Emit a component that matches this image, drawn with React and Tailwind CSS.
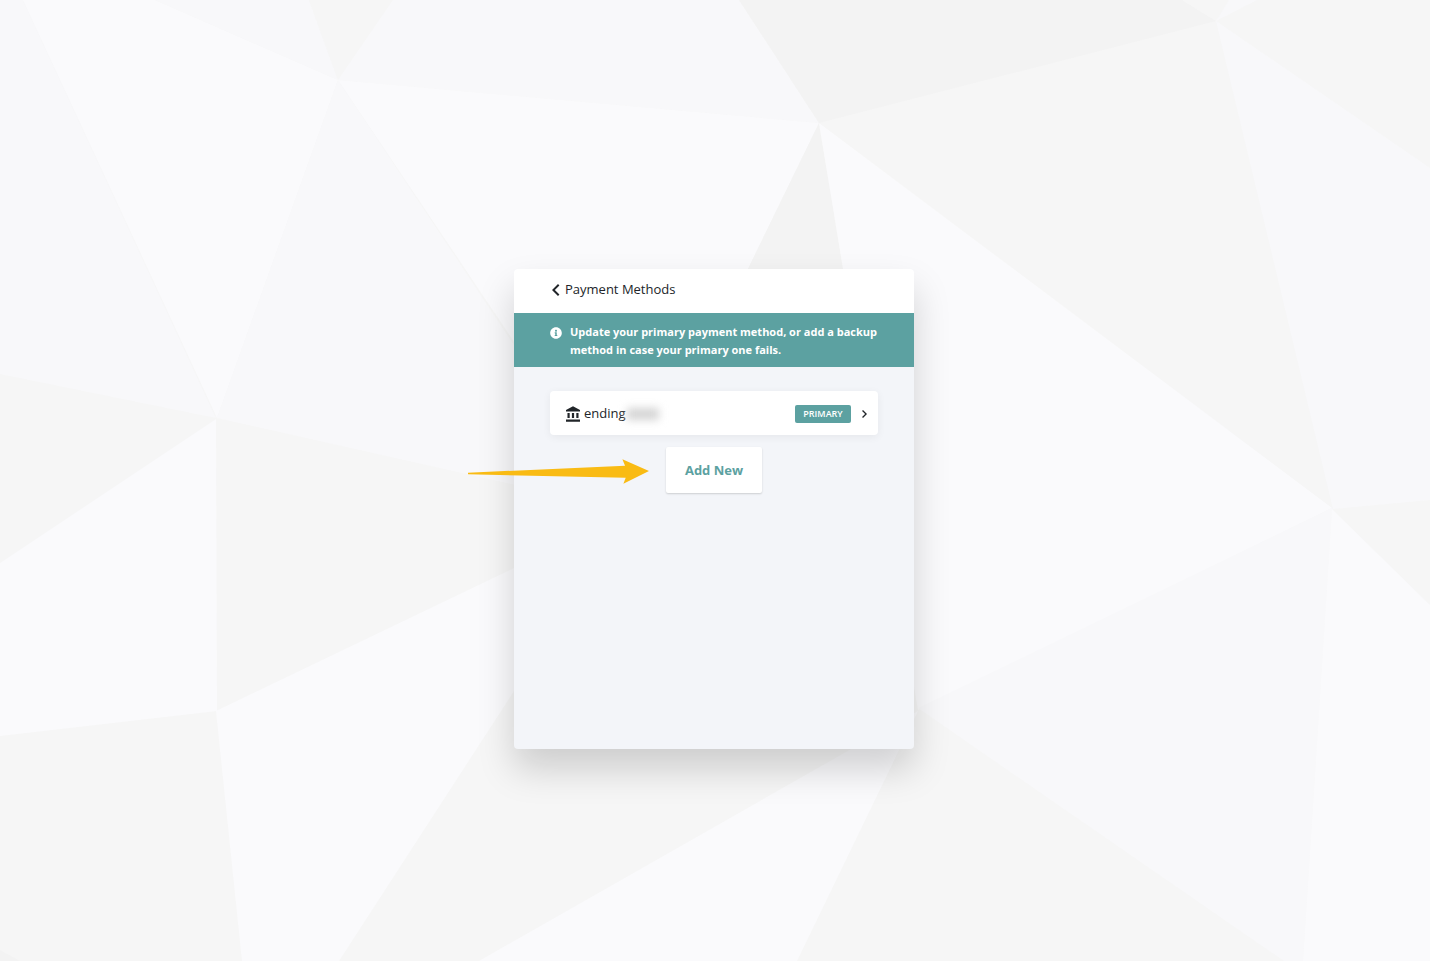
import { useState } from "react"
import { FaInfoCircle } from "react-icons/fa"

const facets = [
  { points: "0,0 23,0 216,418 0,374", fill: "#f8f8fa" },
  { points: "23,0 155,0 338,80 217,418", fill: "#fafafc" },
  { points: "155,0 309,0 338,80", fill: "#f8f8fa" },
  { points: "309,0 393,0 338,80", fill: "#f6f6f6" },
  { points: "393,0 739,0 819,123 338,80", fill: "#f8f8fa" },
  { points: "338,80 819,123 689,390 560,410", fill: "#fafafc" },
  { points: "338,80 600,475 560,495 217,418", fill: "#f8f8fa" },
  { points: "739,0 1182,0 1216,21 819,123", fill: "#f3f3f3" },
  { points: "819,123 868,420 689,390", fill: "#f3f3f3" },
  { points: "819,123 1332,508 918,710 868,420", fill: "#fafafc" },
  { points: "1182,0 1229,0 1216,21", fill: "#f6f6f6" },
  { points: "1229,0 1257,0 1216,21", fill: "#f8f8fa" },
  { points: "1216,21 1430,168 1430,500 1333,509", fill: "#f8f8fa" },
  { points: "1332,508 1332,511 1303,961 1284,961 918,708", fill: "#f8f8fa" },
  { points: "1332,509 1430,605 1430,961 1303,961", fill: "#fafafc" },
  { points: "216,419 217,711 0,736 0,563", fill: "#fafafc" },
  { points: "216,711 560,546 560,620 339,961 242,961", fill: "#fafafc" },
  { points: "918,711 797,961 479,961", fill: "#fafafc" },
  { points: "0,950 20,961 0,961", fill: "#f3f3f3" },
]

function Backdrop() {
  return (
    <svg
      className="absolute inset-0 w-full h-full"
      viewBox="0 0 1430 961"
      preserveAspectRatio="xMidYMid slice"
      aria-hidden="true"
    >
      {facets.map((facet) => (
        <polygon key={facet.points} points={facet.points} fill={facet.fill} />
      ))}
    </svg>
  )
}

function BankIcon() {
  return (
    <svg className="w-[14px] h-4 shrink-0" viewBox="2 1 19 21" fill="currentColor" aria-hidden="true">
      <path d="M11.5,1L2,6V8H21V6M16,10V17H19V10M2,22H21V19H2M10,10V17H13V10M4,10V17H7V10H4Z" />
    </svg>
  )
}

export default function App() {
  const [methods] = useState([{ id: 1, label: "ending", primary: true }])

  return (
    <main className="relative min-h-screen flex items-center justify-center pt-14 pr-0.5 overflow-hidden bg-[#f6f6f6] text-[#212529] font-['Open_Sans','Noto_Sans',sans-serif]">
      <Backdrop />

      <section className="relative w-full max-w-[400px] min-h-[480px] rounded bg-[#f3f5f9] shadow-[0_20px_36px_rgba(0,0,0,0.17)]">
        {/* Header */}
        <header className="h-11 flex items-center px-9 pb-px bg-white rounded-t">
          <button type="button" className="flex items-center gap-[5px] pl-0.5 text-[13px]">
            <svg className="w-2 h-3" viewBox="8 6 8 12" fill="currentColor" aria-hidden="true">
              <path d="M15.41,16.58L10.83,12L15.41,7.41L14,6L8,12L14,18L15.41,16.58Z" />
            </svg>
            Payment Methods
          </button>
        </header>

        {/* Notice */}
        <div className="flex gap-2 px-9 pt-[10px] pb-2 bg-[#5ca1a1] text-white">
          <FaInfoCircle className="w-3 h-5 shrink-0" aria-hidden="true" />
          <p className="text-[11px] leading-[18px] font-bold">
            Update your primary payment method, or add a backup method in case your primary one fails.
          </p>
        </div>

        {/* Methods */}
        <div className="flex flex-col items-center gap-3 px-9 pt-6">
          {methods.map((method) => (
            <button
              key={method.id}
              type="button"
              className="w-full h-11 flex items-center pl-4 pr-[11px] pt-0.5 rounded bg-white shadow-[0_2px_8px_rgba(0,0,0,0.06)]"
            >
              <BankIcon />
              <span className="ml-1 text-[13px]">{method.label}</span>
              <span className="ml-px w-8 h-3 bg-[#d4d4d4] blur-[4px]" />
              {method.primary && (
                <span className="ml-auto w-14 h-[18px] rounded-xs bg-[#5ca1a1] text-center text-[9px] leading-[18px] font-semibold text-white">
                  PRIMARY
                </span>
              )}
              <svg className="ml-[11px] w-[5px] h-2" viewBox="8.5 6 7.5 12" fill="currentColor" aria-hidden="true">
                <path d="M8.59,16.58L13.17,12L8.59,7.41L10,6L16,12L10,18L8.59,16.58Z" />
              </svg>
            </button>
          ))}

          <button
            type="button"
            className="w-24 h-[46px] pt-0.5 rounded-xs bg-white text-[13px] font-bold text-[#5ca1a1] shadow-[0_1px_2px_rgba(0,0,0,0.16)]"
          >
            Add New
          </button>
        </div>

        {/* Pointer to the add button */}
        <svg
          className="absolute -left-[46px] top-[190px] w-[181px] h-[25px] pointer-events-none"
          viewBox="39 41 544 73"
          fill="#f9bb14"
          aria-hidden="true"
        >
          <polygon points="39,81 511,60 503,41 583,76 506,114 513,96 39,86" />
        </svg>
      </section>
    </main>
  )
}
